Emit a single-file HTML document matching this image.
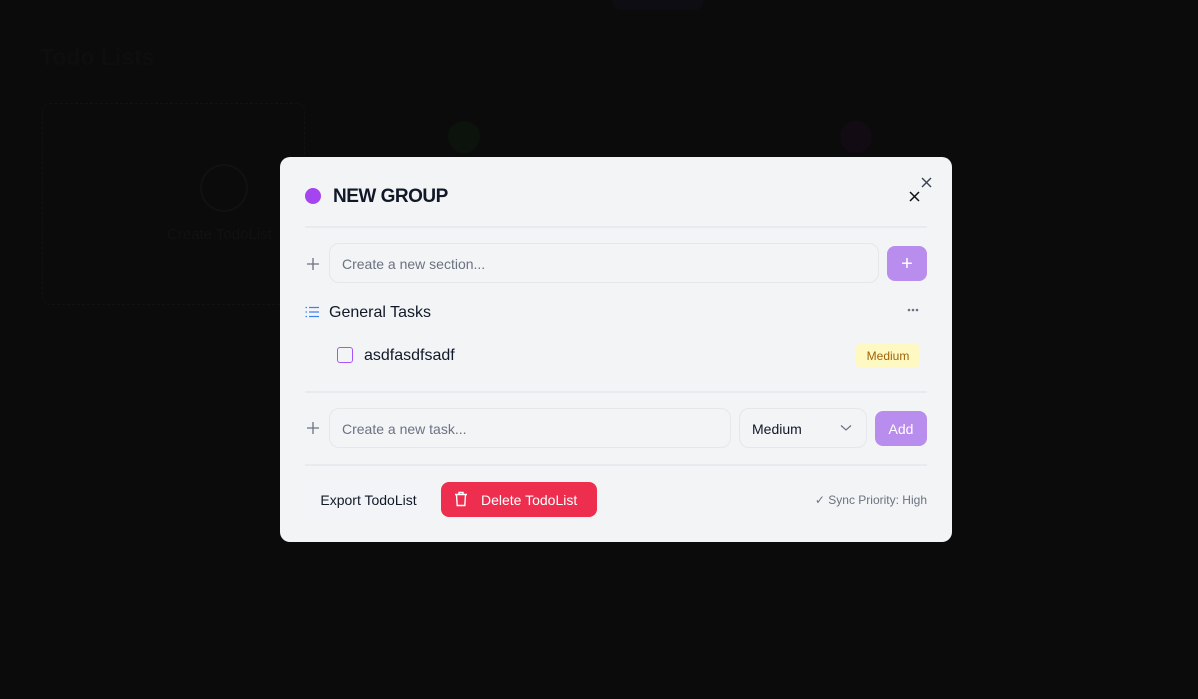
<!DOCTYPE html>
<html><head><meta charset="utf-8"><style>
*{box-sizing:border-box;margin:0;padding:0}
body{width:1198px;height:699px;background:#0b0b0b;font-family:"Liberation Sans",sans-serif;position:relative;overflow:hidden}
.a{position:absolute}
.modal{left:280px;top:157px;width:672px;height:385px;background:#f3f4f6;border-radius:10px}
.inp{border:1px solid #e5e7eb;border-radius:10px;background:#f3f4f6;color:#6b7280;font-size:14px;padding-left:12px;padding-top:2px;display:flex;align-items:center}
.hr{height:2px;background:#e8eaef;left:25px;width:622px}
</style></head><body>
<div class="a" style="left:613px;top:-10px;width:90px;height:20px;background:#0f0d14;border-radius:8px"></div>
<div class="a" style="left:40px;top:44px;font-size:23px;font-weight:bold;color:#0e0e0e">Todo Lists</div>
<div class="a" style="left:42px;top:103px;width:263px;height:202px;border:1px dashed #121212;border-radius:8px"></div>
<div class="a" style="left:200px;top:164px;width:48px;height:48px;border:2px solid #111;border-radius:50%"></div>
<div class="a" style="left:167px;top:226px;font-size:15px;color:#111">Create TodoList</div>
<div class="a" style="left:448px;top:121px;width:32px;height:32px;border-radius:50%;background:#0b130c"></div>
<div class="a" style="left:840px;top:121px;width:32px;height:32px;border-radius:50%;background:#120b13"></div>

<div class="a modal">
  <div class="a" style="left:25px;top:31px;width:16px;height:16px;border-radius:50%;background:#a545f0"></div>
  <div class="a" style="left:53px;top:29px;font-size:19px;font-weight:bold;color:#111827;letter-spacing:-0.5px">NEW GROUP</div>
  <svg class="a" style="left:640px;top:19px" width="13" height="13" viewBox="0 0 13 13"><path d="M2 2L11 11M11 2L2 11" stroke="#374151" stroke-width="1.4"/></svg>
  <svg class="a" style="left:628px;top:33px" width="13" height="13" viewBox="0 0 13 13"><path d="M2 2L11 11M11 2L2 11" stroke="#111" stroke-width="1.5"/></svg>
  <div class="a hr" style="top:69px"></div>
  <svg class="a" style="left:26px;top:100px" width="14" height="14"><path d="M7 1V13M1 7H13" stroke="#6b7280" stroke-width="1.3"/></svg>
  <div class="a inp" style="left:49px;top:86px;width:550px;height:40px">Create a new section...</div>
  <div class="a" style="left:607px;top:89px;width:40px;height:35px;border-radius:8px;background:#b98ded;color:#fff;font-size:20px;text-align:center;line-height:36px">+</div>
  <svg class="a" style="left:25px;top:149px" width="14" height="12"><g stroke="#3b82f6" stroke-width="1.3"><path d="M0.5 1.5h1.5M0.5 6h1.5M0.5 10.5h1.5M4 1.5h10M4 6h10M4 10.5h10"/></g></svg>
  <div class="a" style="left:49px;top:147px;font-size:16px;color:#111827">General Tasks</div>
  <svg class="a" style="left:627px;top:151px" width="12" height="4"><g fill="#6b7280"><circle cx="2" cy="2" r="1.3"/><circle cx="6" cy="2" r="1.3"/><circle cx="10" cy="2" r="1.3"/></g></svg>
  <div class="a" style="left:57px;top:190px;width:16px;height:16px;border:1.5px solid #a855f7;border-radius:3px"></div>
  <div class="a" style="left:84px;top:190px;font-size:16px;color:#111827">asdfasdfsadf</div>
  <div class="a" style="left:576px;top:187px;width:64px;height:23px;border-radius:4px;background:#fef9c3;color:#a16207;font-size:12px;text-align:center;line-height:24px">Medium</div>
  <div class="a hr" style="top:234px"></div>
  <svg class="a" style="left:26px;top:264px" width="14" height="14"><path d="M7 1V13M1 7H13" stroke="#6b7280" stroke-width="1.3"/></svg>
  <div class="a inp" style="left:49px;top:251px;width:402px;height:40px">Create a new task...</div>
  <div class="a inp" style="left:459px;top:251px;width:128px;height:40px;color:#111827">Medium</div>
  <svg class="a" style="left:560px;top:267px" width="12" height="8"><path d="M1 1.5L6 6L11 1.5" stroke="#6b7280" stroke-width="1.2" fill="none"/></svg>
  <div class="a" style="left:595px;top:254px;width:52px;height:35px;border-radius:8px;background:#b98ded;color:#fff;font-size:14px;text-align:center;line-height:36px">Add</div>
  <div class="a hr" style="top:307px"></div>
  <div class="a" style="left:25px;top:325px;width:127px;height:35px;border-radius:8px;background:#f2f4f8;color:#111827;font-size:14px;text-align:center;line-height:36px">Export TodoList</div>
  <div class="a" style="left:161px;top:325px;width:156px;height:35px;border-radius:8px;background:#ee2e4e;color:#fff;font-size:14px;line-height:36px;padding-left:40px">Delete TodoList</div>
  <svg class="a" style="left:174px;top:334px" width="14" height="16" viewBox="0 0 14 16"><g stroke="#fff" stroke-width="1.4" fill="none"><path d="M1 3.5H13M5 3.5V1.5H9V3.5M2.5 3.5L3.2 14.5H10.8L11.5 3.5"/></g></svg>
  <div class="a" style="right:25px;top:336px;font-size:12px;color:#6b7280">✓ Sync Priority: High</div>
</div>
</body></html>
